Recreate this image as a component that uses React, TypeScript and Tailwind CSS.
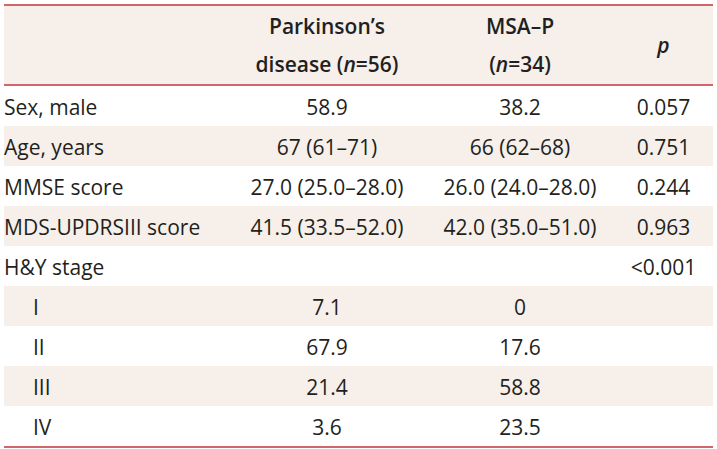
const rows: { label: string; pd: string; msa: string; p: string; shaded: boolean; indent?: boolean }[] = [
  { label: 'Sex, male', pd: '58.9', msa: '38.2', p: '0.057', shaded: false },
  { label: 'Age, years', pd: '67 (61–71)', msa: '66 (62–68)', p: '0.751', shaded: true },
  { label: 'MMSE score', pd: '27.0 (25.0–28.0)', msa: '26.0 (24.0–28.0)', p: '0.244', shaded: false },
  { label: 'MDS-UPDRSIII score', pd: '41.5 (33.5–52.0)', msa: '42.0 (35.0–51.0)', p: '0.963', shaded: true },
  { label: 'H&Y stage', pd: '', msa: '', p: '<0.001', shaded: false },
  { label: 'I', pd: '7.1', msa: '0', p: '', shaded: true, indent: true },
  { label: 'II', pd: '67.9', msa: '17.6', p: '', shaded: false, indent: true },
  { label: 'III', pd: '21.4', msa: '58.8', p: '', shaded: true, indent: true },
  { label: 'IV', pd: '3.6', msa: '23.5', p: '', shaded: false, indent: true },
]

const cols = 'grid grid-cols-[228px_190px_196px_1fr]'

export default function App() {
  return (
    <div className="w-[717px] h-[449px] bg-white pt-[4px] px-[4px] font-['Open_Sans',sans-serif] text-[21px] text-[#231f20]">
      <div className="w-[709px] border-t-2 border-b-2 border-[#d0656b]">
        {/* Header */}
        <div className={`${cols} h-[80px] bg-[#f6efea] border-b-2 border-[#d0656b] font-semibold leading-[38px]`}>
          <div />
          <div className="flex flex-col items-center justify-center">
            <span>Parkinson’s</span>
            <span>
              disease (<i>n</i>=56)
            </span>
          </div>
          <div className="flex flex-col items-center justify-center">
            <span>MSA–P</span>
            <span>
              (<i>n</i>=34)
            </span>
          </div>
          <div className="flex items-center justify-center pr-[4px]">
            <i>p</i>
          </div>
        </div>

        {rows.map((r) => (
          <div
            key={r.label}
            className={`${cols} h-[40px] items-center leading-none pt-[2px] ${r.shaded ? 'bg-[#f6efea]' : 'bg-white'}`}
          >
            <div className={r.indent ? 'pl-[29px]' : ''}>{r.label}</div>
            <div className="text-center">{r.pd}</div>
            <div className="text-center">{r.msa}</div>
            <div className="text-center pr-[4px]">{r.p}</div>
          </div>
        ))}
      </div>
    </div>
  )
}
